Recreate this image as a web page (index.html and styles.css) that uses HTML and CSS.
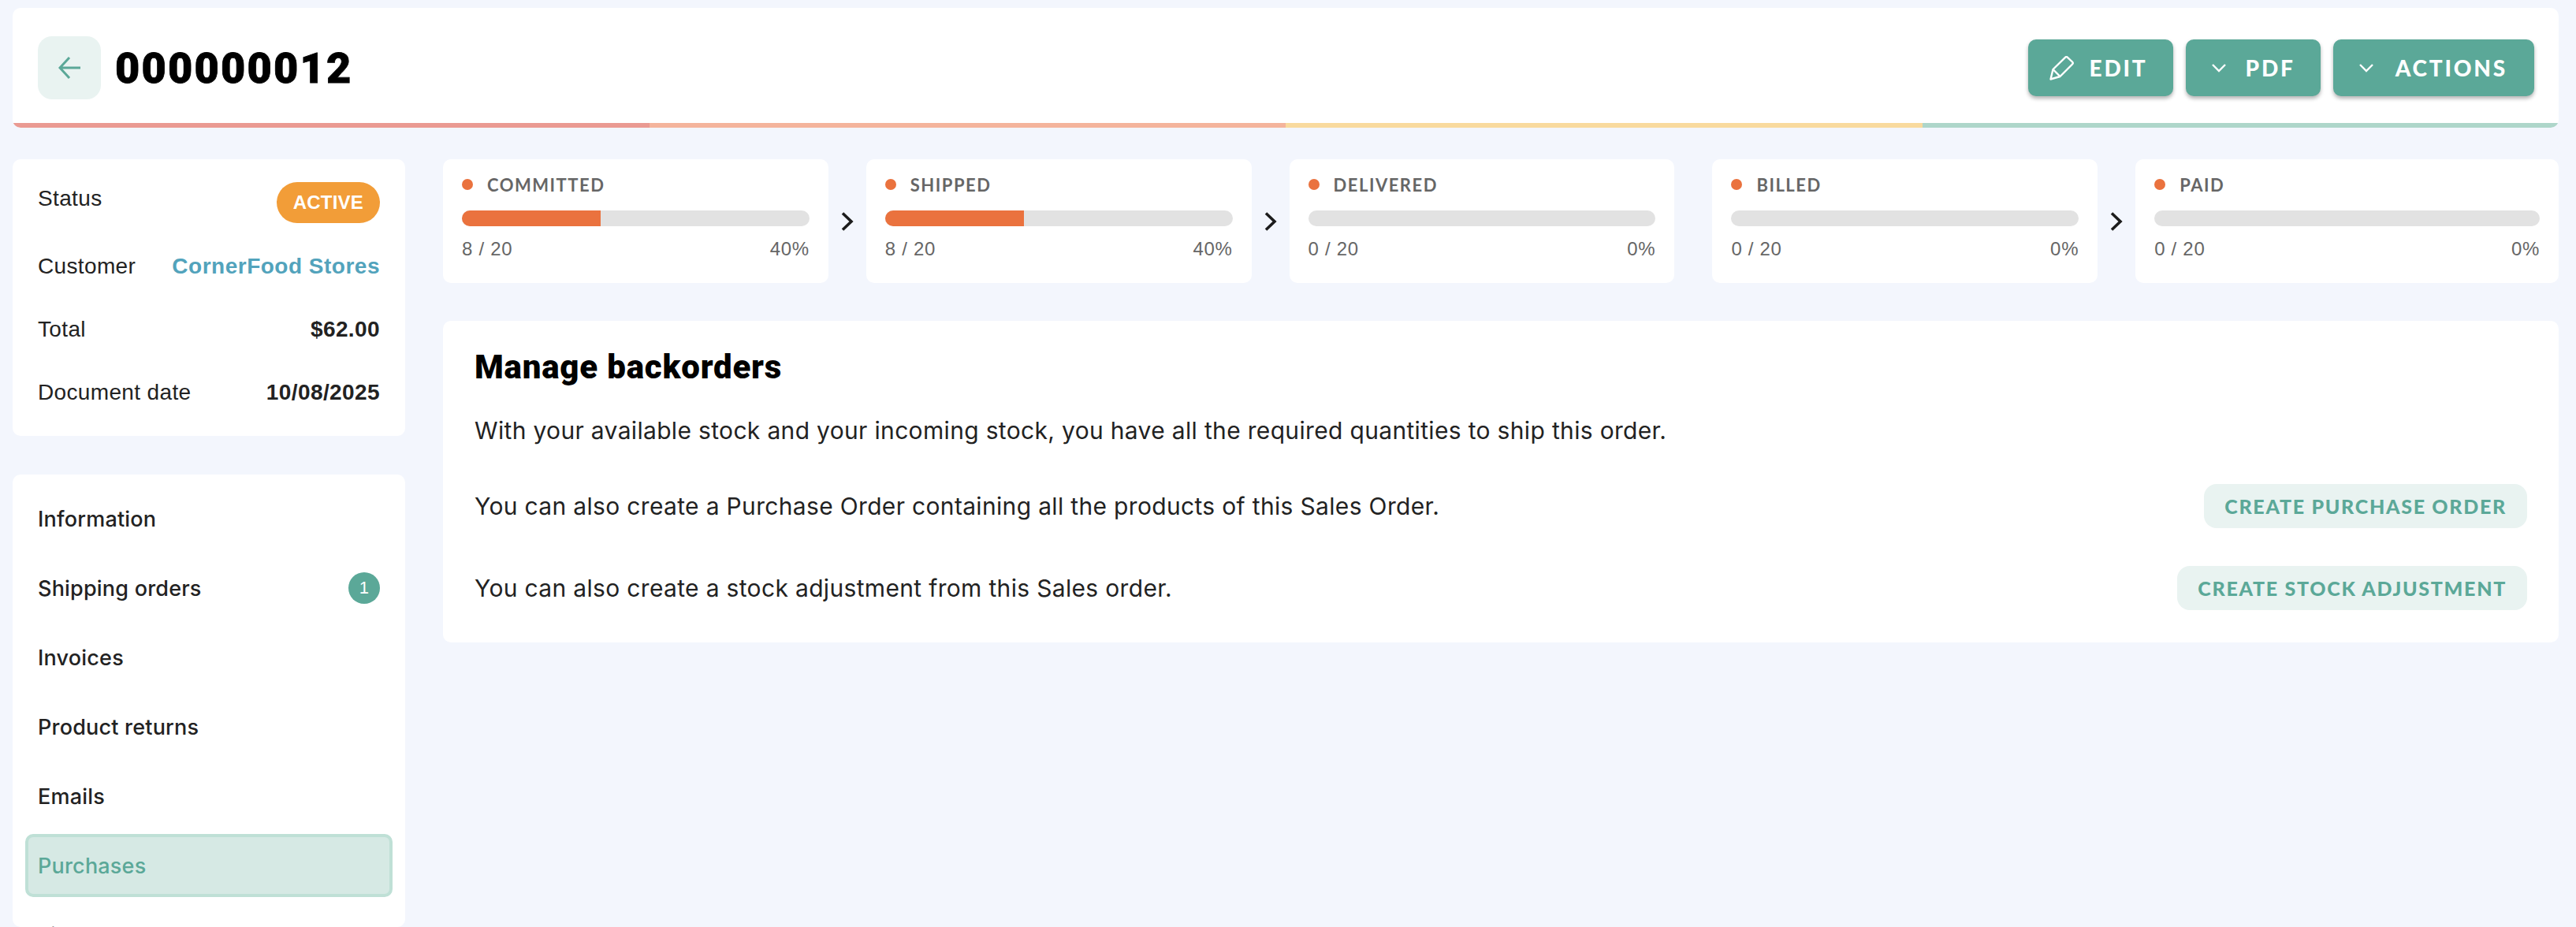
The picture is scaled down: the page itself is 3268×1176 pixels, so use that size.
FILE: index.html
```html
<!DOCTYPE html>
<html lang="en">
<head>
    <meta charset="UTF-8">
    <meta name="viewport" content="width=device-width, initial-scale=1.0">
    <title>Sales order 000000012</title>
    <link rel="stylesheet" href="styles.css">
</head>
<body>
    <!-- Header -->
    <header class="header">
        <div class="header-main">
            <a class="back-btn" href="#">
                <svg width="28" height="28" viewBox="0 0 28 28" fill="none" stroke="#5ba898" stroke-width="3"><path d="M28 14H2M14 1L2 14l12 13"/></svg>
            </a>
            <h1 class="order-no">000000012</h1>
            <div class="header-actions">
                <button class="btn">
                    <svg width="31" height="31" viewBox="0 0 31 31" fill="none" stroke="#fff" stroke-width="2.4" stroke-linejoin="round"><path d="M1.5 29.5L4.5 17 20 1.8q1.5-1.5 3 0L29 7.500q1.500 1.500 0 3L13.500 26z"/><path d="M4.500 17l9 9"/></svg>
                    EDIT
                </button>
                <button class="btn btn-caret">
                    <svg width="18" height="11" viewBox="0 0 18 11" fill="none" stroke="#fff" stroke-width="2.4"><path d="M1 1l8 8 8-8"/></svg>
                    PDF
                </button>
                <button class="btn btn-caret btn-actions">
                    <svg width="18" height="11" viewBox="0 0 18 11" fill="none" stroke="#fff" stroke-width="2.4"><path d="M1 1l8 8 8-8"/></svg>
                    ACTIONS
                </button>
            </div>
        </div>
        <div class="header-stripe">
            <span class="stripe stripe-red"></span>
            <span class="stripe stripe-orange"></span>
            <span class="stripe stripe-yellow"></span>
            <span class="stripe stripe-green"></span>
        </div>
    </header>

    <div class="layout">
        <!-- Sidebar -->
        <aside class="sidebar">
            <div class="card summary">
                <div class="summary-row summary-status">
                    <span>Status</span>
                    <span class="status-pill">ACTIVE</span>
                </div>
                <div class="summary-row">
                    <span>Customer</span>
                    <a class="customer-link" href="#">CornerFood Stores</a>
                </div>
                <div class="summary-row">
                    <span>Total</span>
                    <strong>$62.00</strong>
                </div>
                <div class="summary-row">
                    <span>Document date</span>
                    <strong>10/08/2025</strong>
                </div>
            </div>

            <nav class="card side-nav">
                <a class="nav-item" href="#">Information</a>
                <a class="nav-item" href="#">Shipping orders <span class="nav-count">1</span></a>
                <a class="nav-item" href="#">Invoices</a>
                <a class="nav-item" href="#">Product returns</a>
                <a class="nav-item" href="#">Emails</a>
                <a class="nav-item active" href="#">Purchases</a>
                <a class="nav-item" href="#">Files</a>
            </nav>
        </aside>

        <main class="content">
            <!-- Progress steps -->
            <div class="steps">
                <div class="step">
                    <div class="card step-card">
                        <div class="step-title"><i class="dot"></i>COMMITTED</div>
                        <div class="bar"><div class="bar-fill" style="width: 40%"></div></div>
                        <div class="step-meta"><span>8 / 20</span><span>40%</span></div>
                    </div>
                    <div class="step-arrow"><svg width="16" height="24" viewBox="0 0 16 24" fill="none" stroke="#1c1c1c" stroke-width="3.6"><path d="M2 1.500L13 12 2 22.500"/></svg></div>
                </div>
                <div class="step">
                    <div class="card step-card">
                        <div class="step-title"><i class="dot"></i>SHIPPED</div>
                        <div class="bar"><div class="bar-fill" style="width: 40%"></div></div>
                        <div class="step-meta"><span>8 / 20</span><span>40%</span></div>
                    </div>
                    <div class="step-arrow"><svg width="16" height="24" viewBox="0 0 16 24" fill="none" stroke="#1c1c1c" stroke-width="3.6"><path d="M2 1.500L13 12 2 22.500"/></svg></div>
                </div>
                <div class="step">
                    <div class="card step-card">
                        <div class="step-title"><i class="dot"></i>DELIVERED</div>
                        <div class="bar"></div>
                        <div class="step-meta"><span>0 / 20</span><span>0%</span></div>
                    </div>
                    <div class="step-arrow"></div>
                </div>
                <div class="step">
                    <div class="card step-card">
                        <div class="step-title"><i class="dot"></i>BILLED</div>
                        <div class="bar"></div>
                        <div class="step-meta"><span>0 / 20</span><span>0%</span></div>
                    </div>
                    <div class="step-arrow"><svg width="16" height="24" viewBox="0 0 16 24" fill="none" stroke="#1c1c1c" stroke-width="3.6"><path d="M2 1.500L13 12 2 22.500"/></svg></div>
                </div>
                <div class="step">
                    <div class="card step-card">
                        <div class="step-title"><i class="dot"></i>PAID</div>
                        <div class="bar"></div>
                        <div class="step-meta"><span>0 / 20</span><span>0%</span></div>
                    </div>
                </div>
            </div>

            <!-- Backorders -->
            <section class="card panel">
                <h2 class="panel-title">Manage backorders</h2>
                <p class="panel-text">With your available stock and your incoming stock, you have all the required quantities to ship this order.</p>
                <div class="panel-row">
                    <p class="panel-text">You can also create a Purchase Order containing all the products of this Sales Order.</p>
                    <button class="btn-light">CREATE PURCHASE ORDER</button>
                </div>
                <div class="panel-row">
                    <p class="panel-text">You can also create a stock adjustment from this Sales order.</p>
                    <button class="btn-light">CREATE STOCK ADJUSTMENT</button>
                </div>
            </section>
        </main>
    </div>
</body>
</html>
```

FILE: styles.css
```css
html, body {
    height: 100%;
    overflow: hidden;
}

body {
    display: flex;
    flex-direction: column;
    margin: 0;
    padding: 10px 22px 0 16px;
    box-sizing: border-box;
    background: #f3f6fd;
    font-family: 'Liberation Sans', sans-serif;
    color: #222;
}

.card {
    background: #fff;
    border-radius: 10px;
}

/* Header */
.header {
    flex: none;
    background: #fff;
    border-radius: 10px;
    overflow: hidden;
}

.header-main {
    display: flex;
    align-items: center;
    height: 146px;
    padding: 6px 31px 0 32px;
    box-sizing: border-box;
}

.back-btn {
    display: flex;
    align-items: center;
    justify-content: center;
    width: 80px;
    height: 80px;
    border-radius: 18px;
    background: #e9f3f1;
}

.order-no {
    margin: 0 0 0 18px;
    font-family: Roboto, sans-serif;
    font-size: 54px;
    font-weight: 900;
    letter-spacing: 2.2px;
    color: #000;
    -webkit-text-stroke: 0.8px #000;
}

.header-actions {
    display: flex;
    gap: 16px;
    margin-left: auto;
}

.btn {
    display: flex;
    align-items: center;
    justify-content: center;
    gap: 20px;
    height: 72px;
    padding: 0 32px 0 27px;
    border: none;
    border-radius: 10px;
    background: #5ba898;
    color: #fff;
    font-family: Lato, sans-serif;
    font-size: 28px;
    font-weight: 900;
    letter-spacing: 2.8px;
    box-shadow: 0 3px 5px rgba(0, 0, 0, 0.3);
}

.btn-caret {
    gap: 25px;
    padding: 0 32px 0 33px;
}

.btn-actions {
    gap: 28px;
    padding-right: 34px;
}

.header-stripe {
    display: flex;
    height: 6px;
}

.stripe {
    flex: 1;
}

.stripe-red { background: #ea9a92; }
.stripe-orange { background: #f4b49c; }
.stripe-yellow { background: #f9da9e; }
.stripe-green { background: #aed6ca; }

/* Layout */
.layout {
    flex: 1;
    min-height: 0;
    display: flex;
    gap: 48px;
    margin-top: 40px;
}

.sidebar {
    flex: 0 0 498px;
    display: flex;
    flex-direction: column;
    gap: 49px;
}

.summary {
    flex: none;
    height: 351px;
    padding: 13px 32px 0;
    box-sizing: border-box;
    font-size: 28px;
}

.summary strong {
    letter-spacing: 0.4px;
}

.summary-row {
    display: flex;
    justify-content: space-between;
    align-items: center;
    height: 80px;
    letter-spacing: 0.35px;
}

.summary-status {
    height: 83px;
}

.summary-status > span:first-child {
    margin-bottom: 10px;
}

.status-pill {
    display: flex;
    align-items: center;
    height: 52px;
    padding: 0 21px;
    border-radius: 26px;
    background: #f29d38;
    color: #fff;
    font-size: 24px;
    font-weight: 700;
    letter-spacing: 0.2px;
}

.customer-link {
    color: #52a3bc;
    font-weight: 700;
    letter-spacing: 0.5px;
    text-decoration: none;
}

.side-nav {
    flex: 1;
    min-height: 0;
    display: flex;
    flex-direction: column;
    gap: 8px;
    padding: 16px;
    overflow: hidden;
}

.nav-item {
    display: flex;
    align-items: center;
    justify-content: space-between;
    height: 80px;
    flex: none;
    padding: 0 12px;
    box-sizing: border-box;
    border: 4px solid transparent;
    border-radius: 10px;
    font-family: Inter, sans-serif;
    font-size: 27px;
    font-weight: 500;
    letter-spacing: 0.2px;
    color: #222;
    text-decoration: none;
}

.nav-item.active {
    background: #d6e9e4;
    border-color: #bfe0d6;
    color: #5ba898;
}

.nav-count {
    display: flex;
    align-items: center;
    justify-content: center;
    width: 40px;
    height: 40px;
    border-radius: 50%;
    background: #5ba898;
    color: #fff;
    font-family: 'Liberation Sans', sans-serif;
    font-size: 22px;
    font-weight: 400;
}

/* Steps */
.content {
    flex: 1;
    min-width: 0;
}

.steps {
    display: flex;
}

.step {
    flex: 1;
    min-width: 0;
    display: flex;
}

.step-card {
    flex: 1;
    min-width: 0;
    height: 157px;
    padding: 20px 24px 0;
    box-sizing: border-box;
}

.step-arrow {
    flex: 0 0 48px;
    display: flex;
    align-items: center;
    justify-content: center;
}

.step-title {
    display: flex;
    align-items: center;
    gap: 18px;
    height: 24px;
    font-family: Lato, sans-serif;
    font-size: 22px;
    font-weight: 700;
    letter-spacing: 1.5px;
    color: #666;
}

.dot {
    width: 14px;
    height: 14px;
    border-radius: 50%;
    background: #ea723e;
}

.bar {
    height: 20px;
    margin-top: 21px;
    border-radius: 10px;
    background: #e2e2e2;
    overflow: hidden;
}

.bar-fill {
    height: 100%;
    background: #ea723e;
}

.step-meta {
    display: flex;
    justify-content: space-between;
    margin-top: 15px;
    font-size: 24px;
    letter-spacing: 0.7px;
    color: #666;
}

/* Backorders panel */
.panel {
    margin-top: 48px;
    height: 408px;
    padding: 32px 40px 0;
    box-sizing: border-box;
}

.panel-title {
    margin: 2px 0 0;
    font-family: Roboto, sans-serif;
    font-size: 42px;
    font-weight: 900;
    letter-spacing: 0.8px;
    color: #000;
}

.panel-text {
    margin: 0;
    font-family: Inter, sans-serif;
    font-size: 30px;
    letter-spacing: 0.33px;
    color: #222;
}

.panel-title + .panel-text {
    margin-top: 38px;
}

.panel-row {
    display: flex;
    align-items: center;
    justify-content: space-between;
    height: 104px;
}

.panel-row:nth-of-type(1) {
    margin-top: 26px;
}

.btn-light {
    height: 56px;
    padding: 0 26px;
    border: none;
    border-radius: 16px;
    background: #e9f3f1;
    color: #5ba898;
    font-family: Lato, sans-serif;
    font-size: 25px;
    font-weight: 900;
    letter-spacing: 1.7px;
}
```
